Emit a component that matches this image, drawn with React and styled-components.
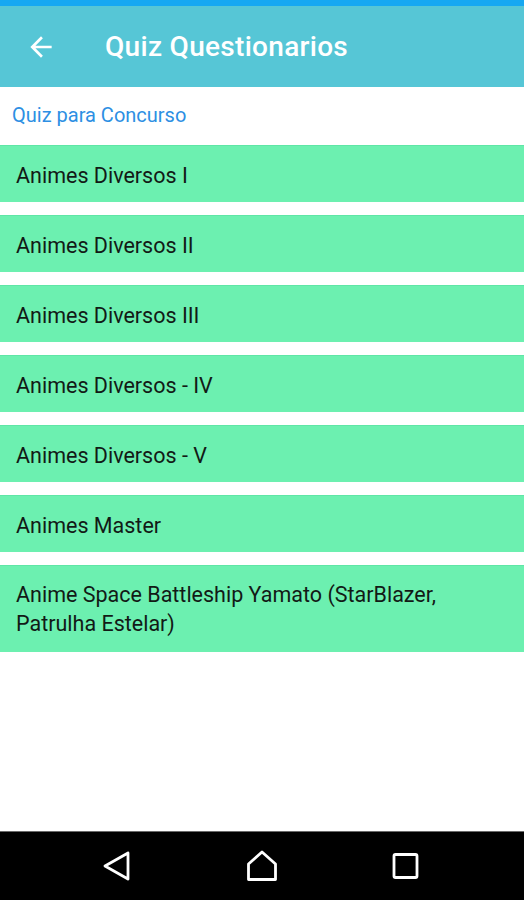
import { createGlobalStyle } from "styled-components";
import styled from "styled-components";

const GlobalStyle = createGlobalStyle`
  html, body {
    margin: 0;
    padding: 0;
    background: #ffffff;
  }
  * {
    box-sizing: border-box;
  }
`;

const Screen = styled.div`
  width: 524px;
  height: 900px;
  display: flex;
  flex-direction: column;
  background: #ffffff;
  font-family: Roboto, "Noto Sans", sans-serif;
  overflow: hidden;
`;
const StatusBar = styled.div`
  height: 6px;
  background: #16a8f2;
  flex-shrink: 0;
`;
const AppBar = styled.div`
  height: 81px;
  flex-shrink: 0;
  display: flex;
  align-items: center;
  background: #56c6d6;
  padding-left: 25px;
`;
const BackButton = styled.div`
  width: 32px;
  height: 32px;
  display: flex;
  align-items: center;
  justify-content: center;
  margin-right: 48px;
`;
const Title = styled.h1`
  margin: 0;
  font-family: Roboto, sans-serif;
  font-weight: 500;
  font-size: 28px;
  color: #ffffff;
  letter-spacing: 0.3px;
`;
const SubHeader = styled.div`
  height: 58px;
  flex-shrink: 0;
  display: flex;
  align-items: center;
  padding-left: 12px;
  padding-bottom: 2px;
  font-size: 20px;
  color: #2d8fe3;
`;
const List = styled.div`
  display: flex;
  flex-direction: column;
  gap: 13px;
  flex: 1;
`;
const Item = styled.div`
  min-height: 57px;
  padding: ${(p) => (p.multi ? "14px 16px 14px" : "3px 16px 0")};
  display: flex;
  align-items: center;
  background: #6cf0b0;
  border-top: 1px solid #5fe6a6;
  font-size: 21.5px;
  line-height: 29px;
  color: #121a16;
`;
const NavBar = styled.div`
  height: 69px;
  flex-shrink: 0;
  background: #000000;
  border-top: 1px solid #6a6a6a;
  display: flex;
  align-items: center;
  justify-content: space-between;
  padding: 0 103px 0 102px;
`;
const NavIcon = styled.svg`
  width: 30px;
  height: 32px;
`;

const items = [
  "Animes Diversos I",
  "Animes Diversos II",
  "Animes Diversos III",
  "Animes Diversos - IV",
  "Animes Diversos - V",
  "Animes Master",
  "Anime Space Battleship Yamato (StarBlazer, Patrulha Estelar)"
];

const App = () => {
  return (
    <Screen>
      <GlobalStyle />
      <StatusBar />
      <AppBar>
        <BackButton>
          <svg width="32" height="32" viewBox="0 0 24 24">
            <path
              d="M20 11H7.83l5.59-5.59L12 4l-8 8 8 8 1.41-1.41L7.83 13H20v-2z"
              fill="#ffffff"
            />
          </svg>
        </BackButton>
        <Title>Quiz Questionarios</Title>
      </AppBar>
      <SubHeader>Quiz para Concurso</SubHeader>
      <List>
        {items.map((name) => (
          <Item key={name} multi={name.length > 40}>
            {name}
          </Item>
        ))}
      </List>
      <NavBar>
        <NavIcon viewBox="0 0 30 32">
          <path
            d="M26 3 L3 16 L26 29 Z"
            fill="none"
            stroke="#ffffff"
            strokeWidth="2.8"
            strokeLinejoin="round"
          />
        </NavIcon>
        <NavIcon viewBox="0 0 30 32">
          <path
            d="M15 2 L28.5 14 L28.5 29.5 L1.5 29.5 L1.5 14 Z"
            fill="none"
            stroke="#ffffff"
            strokeWidth="2.8"
            strokeLinejoin="round"
          />
        </NavIcon>
        <NavIcon viewBox="0 0 30 32">
          <rect
            x="3"
            y="4.5"
            width="23"
            height="23"
            rx="1.5"
            fill="none"
            stroke="#ffffff"
            strokeWidth="2.8"
          />
        </NavIcon>
      </NavBar>
    </Screen>
  );
};

export default App;
